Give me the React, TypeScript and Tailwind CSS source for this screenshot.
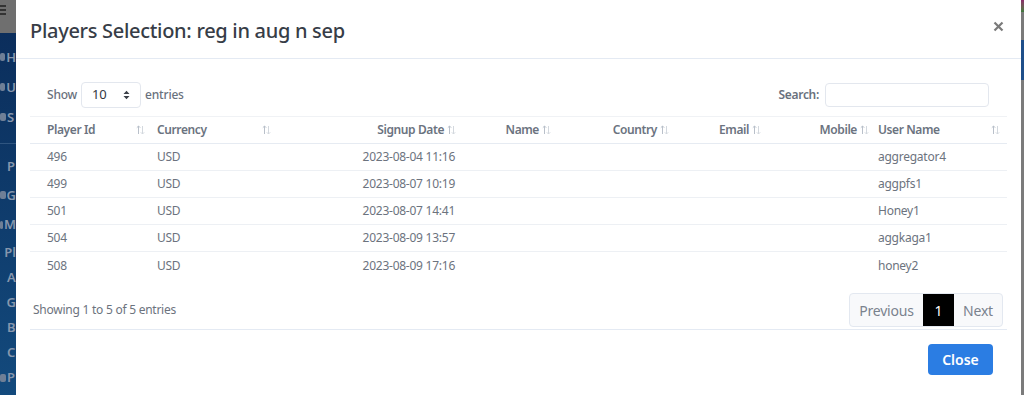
import React from "react";

const font = { fontFamily: '"Noto Sans", "Open Sans", Arial, sans-serif' };

function SortIcon() {
  return (
    <svg width="9" height="10" viewBox="0 0 9 10" className="shrink-0">
      <path d="M2.5 9V1M0.8 2.7L2.5 1L4.2 2.7" stroke="#b9c0ca" strokeWidth="1" fill="none" />
      <path d="M6.5 1V9M4.8 7.3L6.5 9L8.2 7.3" stroke="#d3d8de" strokeWidth="1" fill="none" />
    </svg>
  );
}

const rows = [
  ["496", "USD", "2023-08-04 11:16", "aggregator4"],
  ["499", "USD", "2023-08-07 10:19", "aggpfs1"],
  ["501", "USD", "2023-08-07 14:41", "Honey1"],
  ["504", "USD", "2023-08-09 13:57", "aggkaga1"],
  ["508", "USD", "2023-08-09 17:16", "honey2"],
];

function Sidebar() {
  const items = ["H", "U", "S"];
  const items2: [string, string, boolean][] = [
    ["P", "h-[27px]", false],
    ["G", "h-[30px]", true],
    ["M", "h-[29px]", true],
    ["Pl", "h-[26px]", false],
    ["A", "h-[25px]", false],
    ["G", "h-[25px]", false],
    ["B", "h-[25px]", false],
    ["C", "h-[25px]", false],
    ["P", "h-[25px]", true],
  ];
  return (
    <div className="w-[16px] h-full shrink-0 flex flex-col overflow-hidden">
      <div className="h-[33px] bg-[#6f6f6f] flex flex-col gap-[2px] pt-[5px]">
        <div className="w-[6px] h-[2px] bg-[#333]" />
        <div className="w-[6px] h-[2px] bg-[#333]" />
        <div className="w-[6px] h-[2px] bg-[#333]" />
      </div>
      <div className="flex-1 bg-gradient-to-b from-[#0b2e5c] to-[#134a7d] flex flex-col text-[#8797ad] text-[13px] font-semibold leading-none">
        <div className="h-[9px] shrink-0" />
        {items.map((t, i) => (
          <div key={i} className="h-[30px] shrink-0 flex items-center gap-[1px]">
            <span className="w-[6px] h-[8px] rounded-[2px] bg-[#6f7f96]" />
            <span>{t}</span>
          </div>
        ))}
        <div className="h-[1px] bg-[#2f5580] mt-[11px] shrink-0" />
        <div className="h-[9px] shrink-0" />
        {items2.map(([t, h, ic], i) => (
          <div key={i} className={`${h} shrink-0 flex items-center gap-[1px]`}>
            {ic ? <span className="w-[6px] h-[8px] rounded-[2px] bg-[#6f7f96]" /> : <span className="w-[6px]" />}
            <span>{t}</span>
          </div>
        ))}
      </div>
    </div>
  );
}

export default function App() {
  return (
    <div className="w-[1024px] h-[395px] flex overflow-hidden bg-[#787878]" style={font}>
      <Sidebar />
      <div className="w-[1005px] h-full bg-white flex flex-col shrink-0">
        {/* header */}
        <div className="h-[59px] border-b border-[#e4eaf3] flex items-center justify-between pl-[14px] pr-[17px] shrink-0">
          <h2 className="text-[20px] font-medium text-[#373d47] tracking-[-0.3px] pt-[3px]">
            Players Selection: reg in aug n sep
          </h2>
          <svg width="11" height="11" viewBox="0 0 11 11" className="mt-[-6px]">
            <path d="M1.5 1.5L9.5 9.5M9.5 1.5L1.5 9.5" stroke="#7a7a7a" strokeWidth="2.2" />
          </svg>
        </div>
        {/* body */}
        <div className="px-[14px] pt-[23px] flex flex-col">
          <div className="flex items-center justify-between pl-[17px] pr-[18px] h-[25px]">
            <div className="flex items-center text-[12px] font-medium text-[#69717d] tracking-[-0.2px]">
              <span>Show</span>
              <div className="ml-[4px] w-[60px] h-[26px] border border-[#e3e7ee] rounded-[4px] flex items-center pl-[10px] pr-[10px] justify-between text-[13px] text-[#33383f] font-normal">
                <span>10</span>
                <svg width="7" height="10" viewBox="0 0 7 10">
                  <path d="M0.5 4L3.5 0.8L6.5 4Z M0.5 6L3.5 9.2L6.5 6Z" fill="#3a3f47" />
                </svg>
              </div>
              <span className="ml-[4px]">entries</span>
            </div>
            <div className="flex items-center text-[12px] font-semibold text-[#69717d] tracking-[-0.3px]">
              <span>Search:</span>
              <div className="ml-[6px] w-[164px] h-[24px] border border-[#e3e7ee] rounded-[4px]" />
            </div>
          </div>
          {/* table */}
          <div className="mt-[9px] border-t border-[#f0f2f5] text-[12px]">
            <div className="flex h-[27px] items-center border-b border-[#e6ebf2] font-semibold text-[#6b7380] tracking-[-0.4px]">
              <div className="w-[120px] pl-[17px] pr-[5px] flex items-center justify-between">
                <span>Player Id</span>
                <SortIcon />
              </div>
              <div className="w-[130px] pl-[7px] pr-[9px] flex items-center justify-between">
                <span>Currency</span>
                <SortIcon />
              </div>
              <div className="w-[180px] pr-[4px] flex items-center justify-end gap-[3px]">
                <span>Signup Date</span>
                <SortIcon />
              </div>
              <div className="w-[95px] pr-[4px] flex items-center justify-end gap-[3px]">
                <span>Name</span>
                <SortIcon />
              </div>
              <div className="w-[118px] pr-[4px] flex items-center justify-end gap-[3px]">
                <span>Country</span>
                <SortIcon />
              </div>
              <div className="w-[92px] pr-[4px] flex items-center justify-end gap-[3px]">
                <span>Email</span>
                <SortIcon />
              </div>
              <div className="w-[108px] pr-[4px] flex items-center justify-end gap-[3px]">
                <span>Mobile</span>
                <SortIcon />
              </div>
              <div className="flex-1 pl-[5px] pr-[7px] flex items-center justify-between">
                <span>User Name</span>
                <SortIcon />
              </div>
            </div>
            {rows.map((r, i) => (
              <div
                key={i}
                className={`flex h-[27px] items-center text-[#6c737e] tracking-[-0.25px] ${i < rows.length - 1 ? "border-b border-[#edf0f4]" : ""}`}
              >
                <div className="w-[120px] pl-[17px]">{r[0]}</div>
                <div className="w-[130px] pl-[7px]">{r[1]}</div>
                <div className="w-[180px] text-right pr-[5px]">{r[2]}</div>
                <div className="w-[95px]" />
                <div className="w-[118px]" />
                <div className="w-[92px]" />
                <div className="w-[108px]" />
                <div className="flex-1 pl-[5px]">{r[3]}</div>
              </div>
            ))}
          </div>
          {/* footer of table */}
          <div className="mt-[14px] flex items-center justify-between pl-[3px] pr-[4px] h-[34px]">
            <span className="text-[12px] text-[#6c737e] tracking-[-0.25px]">Showing 1 to 5 of 5 entries</span>
            <div className="flex h-[34px] border border-[#e3e8f0] rounded-[4px] bg-[#f8f9fb] text-[14px] text-[#7a828e] overflow-hidden tracking-[-0.2px]">
              <div className="w-[73px] flex items-center justify-center">Previous</div>
              <div className="w-[31px] flex items-center justify-center bg-black text-white">1</div>
              <div className="w-[48px] flex items-center justify-center">Next</div>
            </div>
          </div>
          <div className="mt-[2px] border-t border-[#e4eaf3]" />
          <div className="flex justify-end pt-[14px] pr-[14px]">
            <button className="w-[65px] h-[31px] rounded-[4px] bg-[#2b7de3] text-white text-[14px] font-semibold">
              Close
            </button>
          </div>
        </div>
      </div>
      <div className="flex-1 flex flex-col">
        <div className="h-[12px] bg-gradient-to-b from-[#8a2a6a] to-[#3a7a3a]" />
        <div className="h-[28px] bg-[#7a7a7a]" />
        <div className="h-[40px] bg-[#1f4f8a]" />
        <div className="flex-1 bg-[#7b7b7b]" />
      </div>
    </div>
  );
}
